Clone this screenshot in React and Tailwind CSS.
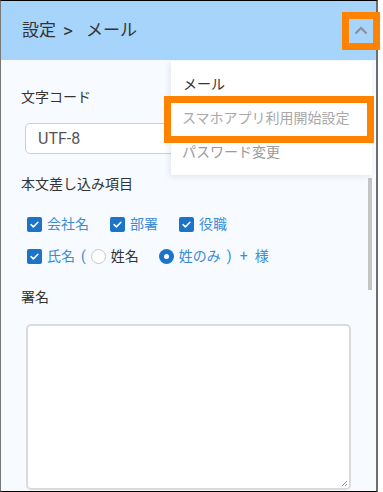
import React from "react";

function Check() {
  return (
    <span className="flex h-[15px] w-[15px] items-center justify-center rounded-[2px] bg-[#1c74c9]">
      <svg width="11" height="11" viewBox="0 0 12 12" fill="none">
        <path d="M2.3 6.2l2.5 2.4 4.9-5" stroke="#fff" strokeWidth="1.7" strokeLinecap="round" strokeLinejoin="round" />
      </svg>
    </span>
  );
}

export default function App() {
  return (
    <div
      className="relative h-[492px] w-[383px] overflow-hidden bg-white"
      style={{ fontFamily: 'Roboto, "Noto Sans CJK JP", sans-serif' }}
    >
      <div className="flex h-[492px] w-[378px] flex-col border-y border-y-black border-l border-l-[#777] border-r-2 border-r-[#6d6d6d]">
        {/* header */}
        <div className="flex h-[59px] shrink-0 items-center justify-between bg-[#a6d4fa] pl-[21px] pr-[3px]">
          <span className="flex items-center text-[17px] text-[#333]">
            <span>設定</span>
            <span className="ml-[3px] w-[18px] text-center text-[19px] leading-[24px]">&gt;</span>
            <span className="ml-[9px]">メール</span>
          </span>
          <span className="flex h-[24px] w-[24px] items-center justify-center">
            <svg width="14" height="9" viewBox="0 0 14 9" fill="none">
              <path d="M1.5 7.5L7 2l5.5 5.5" stroke="#8a8f94" strokeWidth="2" />
            </svg>
          </span>
        </div>
        {/* body */}
        <div className="flex flex-1 flex-col bg-[#f7fbff] pl-[20px] pt-[27px]">
          <div className="text-[14px] leading-[20px] text-[#333]">文字コード</div>
          <div className="mt-[16px] ml-[4px] flex h-[31px] w-[326px] items-center rounded-[5px] border border-[#cfcfcf] bg-white pl-[12px] text-[16px] text-[#555]">
            UTF-8
          </div>
          <div className="mt-[20px] text-[14px] leading-[20px] text-[#333]">本文差し込み項目</div>
          <div className="mt-[20px] ml-[6px] flex h-[20px] items-center text-[14px] text-[#3c8bd6]">
            <Check />
            <span className="ml-[5px]">会社名</span>
            <span className="ml-[21px]"><Check /></span>
            <span className="ml-[5px]">部署</span>
            <span className="ml-[21px]"><Check /></span>
            <span className="ml-[5px]">役職</span>
          </div>
          <div className="mt-[12px] ml-[6px] flex h-[20px] items-center text-[14px] text-[#3c8bd6]">
            <Check />
            <span className="ml-[5px]">氏名</span>
            <span className="ml-[6px]">(</span>
            <span className="ml-[5px] h-[15px] w-[15px] rounded-full border border-[#c8c8c8] bg-white" />
            <span className="ml-[5px] text-[#333]">姓名</span>
            <span className="ml-[20px] flex h-[15px] w-[15px] items-center justify-center rounded-full bg-[#1c74c9]">
              <span className="h-[5px] w-[5px] rounded-full bg-white" />
            </span>
            <span className="ml-[5px]">姓のみ</span>
            <span className="ml-[6px]">)</span>
            <span className="ml-[8px]">+</span>
            <span className="ml-[7px]">様</span>
          </div>
          <div className="mt-[21px] text-[14px] leading-[20px] text-[#333]">署名</div>
          <div className="relative mt-[17px] ml-[5px] h-[166px] w-[325px] rounded-[5px] border-2 border-[#dadada] bg-white">
            <svg className="absolute bottom-[1px] right-[1px]" width="7" height="7" viewBox="0 0 7 7">
              <path d="M6 1L1 6M6 4L4 6" stroke="#999" strokeWidth="1" />
            </svg>
          </div>
        </div>
      </div>

      {/* scrollbar thumb */}
      <div className="absolute left-[368px] top-[178px] h-[112px] w-[4px] bg-[#c4c4c4]" />

      {/* dropdown menu */}
      <div className="absolute left-[171px] top-[61px] flex h-[114px] w-[201px] flex-col bg-white pl-[11px] text-[14px] shadow-[-2px_2px_6px_rgba(0,0,0,0.08)]">
        <div className="flex h-[48px] items-center pl-[1px] pt-[1px] text-[#333]">メール</div>
        <div className="flex h-[24px] items-center text-[#a8a8a8]">スマホアプリ利用開始設定</div>
        <div className="flex h-[48px] items-center text-[#9a9a9a]">パスワード変更</div>
      </div>

      {/* orange highlights */}
      <div className="absolute left-[164px] top-[96px] h-[47px] w-[210px] border-[7px] border-[#ff8200]" />
      <div className="absolute left-[342px] top-[12px] h-[38px] w-[38px] border-[7px] border-[#ff8200]" />
    </div>
  );
}
